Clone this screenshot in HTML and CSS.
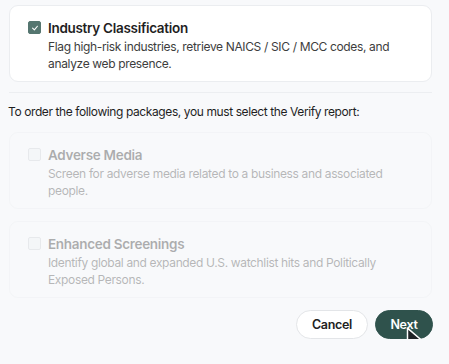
FILE: index.html
```html
<!DOCTYPE html>
<html lang="en">
<head>
    <meta charset="UTF-8">
    <meta name="viewport" content="width=device-width, initial-scale=1.0">
    <title>Select packages</title>
    <link rel="stylesheet" href="styles.css">
</head>
<body>
    <div class="packages">
        <label class="package">
            <span class="check checked">
                <svg viewBox="0 0 10 10" width="8" height="8"><path d="M2 5.2 L4.2 7.3 L8 2.8" fill="none" stroke="#fff" stroke-width="1.4" stroke-linecap="round" stroke-linejoin="round"/></svg>
            </span>
            <span class="package-text">
                <span class="package-title">Industry Classification</span>
                <span class="package-desc">Flag high-risk industries, retrieve NAICS / SIC / MCC codes, and analyze web presence.</span>
            </span>
        </label>

        <hr class="divider">

        <p class="notice">To order the following packages, you must select the Verify report:</p>

        <label class="package disabled">
            <span class="check"></span>
            <span class="package-text">
                <span class="package-title">Adverse Media</span>
                <span class="package-desc">Screen for adverse media related to a business and associated people.</span>
            </span>
        </label>

        <label class="package disabled">
            <span class="check"></span>
            <span class="package-text">
                <span class="package-title">Enhanced Screenings</span>
                <span class="package-desc">Identify global and expanded U.S. watchlist hits and Politically Exposed Persons.</span>
            </span>
        </label>
    </div>

    <div class="actions">
        <button class="btn btn-cancel">Cancel</button>
        <button class="btn btn-next">Next
            <svg class="cursor" viewBox="0 0 20 24" width="23" height="27"><path d="M2 1 L2 18 L6.5 14 L10 22 L13 20.6 L9.6 13 L16 13 Z" fill="#1f2326" stroke="#fff" stroke-width="1.3" stroke-linejoin="round"/></svg>
        </button>
    </div>
</body>
</html>
```

FILE: styles.css
```css
* { box-sizing: border-box; }
body { font-family: 'Inter', 'Liberation Sans', sans-serif; margin: 0; padding: 5px 17px 0 9px; background-color: #f8f9fb; color: #222; }
.packages { display: flex; flex-direction: column; }
.package { display: flex; gap: 7px; align-items: flex-start; background: #fff; border: 1px solid #ebedf0; border-radius: 9px; padding: 12px 18px 9px 18px; height: 77px; }
.package + .package { margin-top: 12px; }
.check { flex: none; display: flex; align-items: center; justify-content: center; width: 13px; height: 13px; margin-top: 3px; border: 1px solid #c9ced3; border-radius: 2px; background: #eef1f3; }
.check.checked { background: #557670; border-color: #557670; }
.package-text { display: flex; flex-direction: column; }
.package-title { font-size: 13.5px; font-weight: 600; line-height: 20px; letter-spacing: -0.3px; color: #1f1f1f; }
.package-desc { font-size: 12px; line-height: 17px; letter-spacing: -0.35px; color: #3d3d3d; }
.disabled { opacity: 0.35; background: #fafbfc; }
.divider { border: none; border-top: 1px solid #eceef1; margin: 10px 0 0 0; }
.notice { font-size: 12px; line-height: 17px; letter-spacing: -0.4px; margin: 10px 0 12px -1px; color: #1f1f1f; }
.actions { display: flex; justify-content: flex-end; gap: 7px; margin-top: 12px; margin-right: -1px; }
.btn { position: relative; height: 29px; border-radius: 15px; font-family: inherit; font-size: 12.5px; font-weight: 600; letter-spacing: -0.3px; cursor: pointer; }
.btn-cancel { width: 72px; background: #fff; border: 1px solid #e3e5e8; color: #222; }
.btn-next { width: 58px; background: #2f524c; border: 1px solid #2f524c; color: #fff; }
.cursor { position: absolute; left: 29px; top: 16px; }
```
